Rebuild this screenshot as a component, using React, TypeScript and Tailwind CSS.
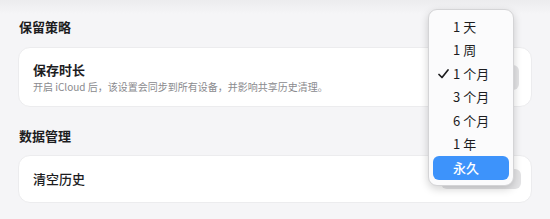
import React from 'react';

const options = ['1 天', '1 周', '1 个月', '3 个月', '6 个月', '1 年', '永久'];

export default function App() {
  const font = { fontFamily: '"Noto Sans CJK SC", "Noto Sans", sans-serif' };
  return (
    <div className="relative w-[550px] h-[219px] overflow-hidden bg-[#f5f5f7] text-[#1d1d1f]" style={font}>
      <div className="absolute inset-x-0 top-0 h-[14px] bg-gradient-to-b from-[#ececee] to-transparent" />

      <div className="px-[18px] pt-[18px]">
        {/* 保留策略 */}
        <h2 className="pl-[1px] text-[13px] font-bold leading-[18px]">保留策略</h2>
        <div className="mt-[11px] h-[60px] rounded-[12px] border border-[#ececee] bg-white pl-[14px] pr-[12px] flex items-center justify-between">
          <div className="flex flex-col">
            <span className="text-[13px] font-semibold leading-[18px]">保存时长</span>
            <span className="mt-[1px] text-[10px] leading-[14px] text-[#8a8a8e]">
              开启 iCloud 后，该设置会同步到所有设备，并影响共享历史清理。
            </span>
          </div>
          <div className="h-[25px] w-[80px] rounded-[6px] bg-[#e3e3e5]" />
        </div>

        {/* 数据管理 */}
        <h2 className="mt-[20px] pl-[1px] text-[13px] font-bold leading-[18px]">数据管理</h2>
        <div className="mt-[10px] h-[48px] rounded-[12px] border border-[#ececee] bg-white pl-[14px] pr-[10px] flex items-center justify-between">
          <span className="text-[13px] font-medium leading-[18px]">清空历史</span>
          <div className="h-[20px] w-[80px] rounded-[6px] bg-[#e3e3e5]" />
        </div>
      </div>

      {/* popup menu */}
      <div className="absolute left-[428px] top-[9px] w-[86px] rounded-[9px] border border-[#d4d4d6] bg-[#fbfbfc] px-[4px] py-[5px] shadow-[0_3px_8px_rgba(0,0,0,0.18)]">
        {options.map((o) => {
          const selected = o === '1 个月';
          const highlighted = o === '永久';
          return (
            <div
              key={o}
              className={
                highlighted
                  ? 'relative flex h-[24px] items-center rounded-[6px] bg-[#3d93fb] pl-[20px] text-[13px] font-medium text-white'
                  : 'relative flex h-[23.5px] items-center pl-[20px] text-[13px] text-[#1d1d1f]'
              }
            >
              {selected && (
                <svg className="absolute left-[5px] top-[7px] h-[10px] w-[11px]" viewBox="0 0 11 10" fill="none">
                  <path d="M1 5.5 L4 8.5 L10 1" stroke="#1d1d1f" strokeWidth="1.7" strokeLinecap="round" strokeLinejoin="round" />
                </svg>
              )}
              <span className="leading-[18px]">{o}</span>
            </div>
          );
        })}
      </div>
    </div>
  );
}
